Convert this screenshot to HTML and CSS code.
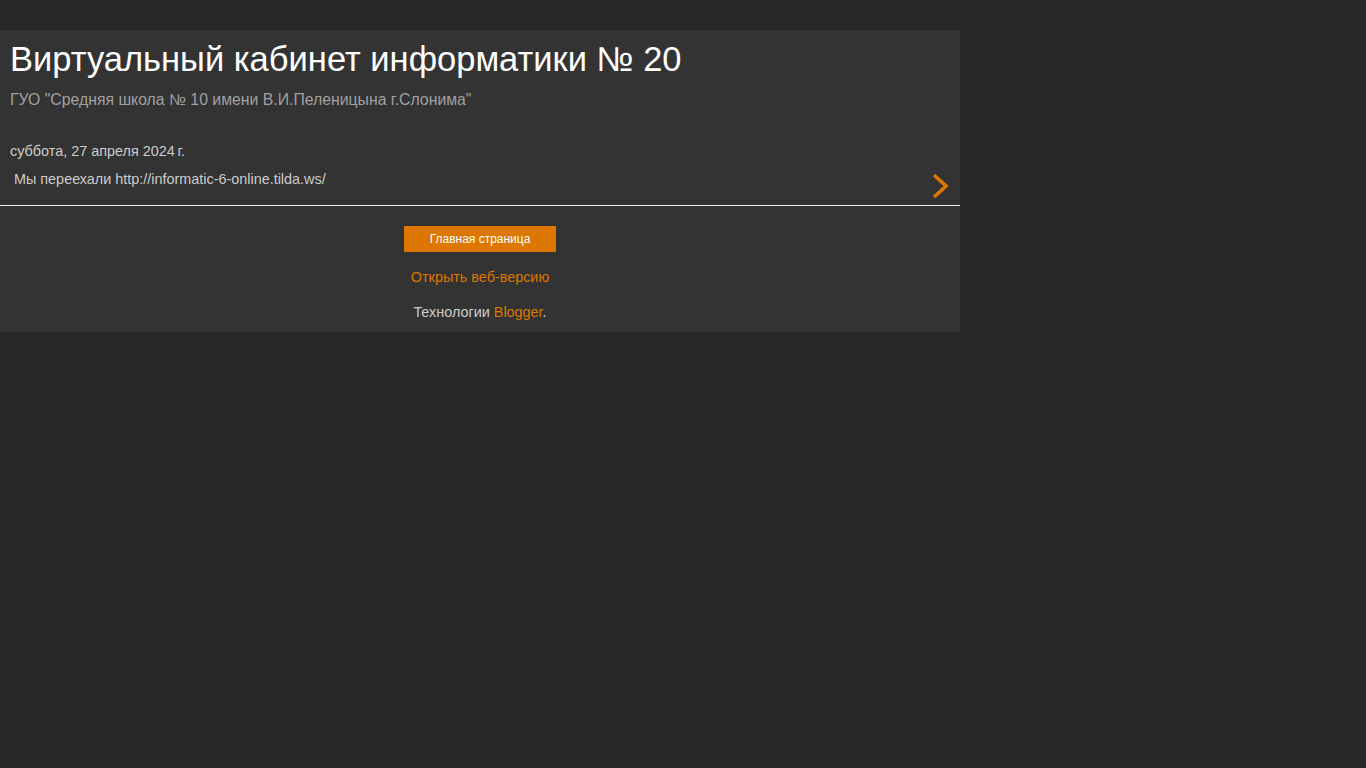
FILE: index.html
```html
<!DOCTYPE html>
<html>

<head>
    <meta charset="UTF-8">
    <meta name="viewport" content="width=device-width, initial-scale=1.0">
    <title>Виртуальный кабинет информатики № 20</title>
    <link rel="stylesheet" href="styles.css">
</head>

<body>
    <div class="content-outer">

        <!-- =========== Header =========== -->
        <div class="header">
            <h1 class="title">Виртуальный кабинет информатики № 20</h1>
            <p class="description">ГУО "Средняя школа № 10 имени В.И.Пеленицына г.Слонима"</p>
        </div>

        <!-- =========== Posts =========== -->
        <div class="main">
            <h2 class="date-header">суббота, 27 апреля 2024&#8239;г.</h2>
            <div class="post">
                <p class="post-summary">Мы переехали http://informatic-6-online.tilda.ws/</p>
                <a class="post-arrow" href="#">
                    <svg width="17" height="26" viewBox="0 0 17 26">
                        <polyline points="2,2 14,13 2,24" fill="none" stroke="#dd7700" stroke-width="3.6" stroke-linecap="butt" stroke-linejoin="miter"/>
                    </svg>
                </a>
            </div>
        </div>

        <!-- =========== Footer =========== -->
        <div class="footer">
            <a class="home-button" href="#">Главная страница</a>
            <a class="web-link" href="#">Открыть веб-версию</a>
            <p class="attribution">Технологии <a href="#">Blogger</a>.</p>
        </div>
    </div>
</body>

</html>
```

FILE: styles.css
```css
* {
    margin: 0;
    padding: 0;
    box-sizing: border-box;
}

:root {
    --bg: #292929;
    --panel: #333333;
    --orange: #dd7700;
    --white: #ffffff;
    --light: #cccccc;
    --gray: #a0a0a0;
}

body {
    background: var(--bg);
    font-family: "Liberation Sans", Arial, sans-serif;
    color: var(--light);
    padding-top: 30px;
    min-height: 100vh;
}

a {
    color: var(--orange);
    text-decoration: none;
}

.content-outer {
    width: 960px;
    background: var(--panel);
}

.header {
    padding: 8px 10px 0 10px;
}

.title {
    font-size: 34.5px;
    font-weight: normal;
    color: var(--white);
    line-height: 42px;
}

.description {
    font-size: 15.8px;
    color: var(--gray);
    margin-top: 10px;
    line-height: 20px;
}

.main {
    padding: 32px 0 0 0;
    border-bottom: 1px solid #eeeeee;
}

.date-header {
    font-size: 14.4px;
    font-weight: normal;
    color: var(--light);
    padding: 0 10px;
    line-height: 18px;
}

.post {
    position: relative;
    padding: 10px 40px 17px 14px;
}

.post-summary {
    font-size: 14.4px;
    color: var(--light);
    line-height: 18px;
}

.post-arrow {
    position: absolute;
    right: 11px;
    top: 13px;
    display: block;
    width: 17px;
    height: 26px;
}

.post-arrow svg {
    display: block;
}

.footer {
    display: flex;
    flex-direction: column;
    align-items: center;
    padding: 20px 0 11px 0;
}

.home-button {
    display: block;
    width: 152px;
    height: 26px;
    line-height: 26px;
    background: var(--orange);
    color: var(--white);
    font-size: 12px;
    text-align: center;
    border-radius: 1px;
}

.web-link {
    font-size: 14.4px;
    margin-top: 16px;
    line-height: 18px;
}

.attribution {
    font-size: 14.4px;
    color: var(--light);
    margin-top: 17px;
    line-height: 18px;
}
```
